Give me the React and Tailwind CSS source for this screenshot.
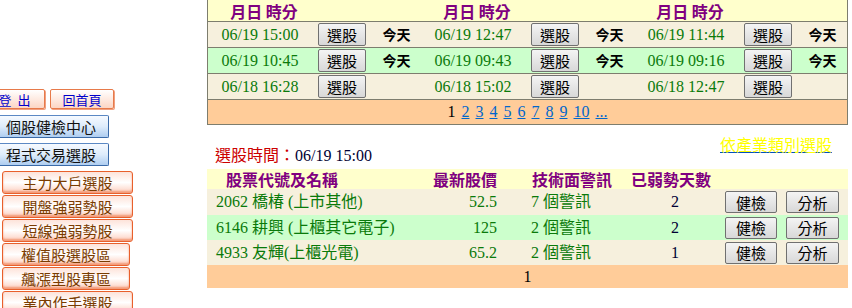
import React from 'react';

const topRows = [
  { bg: 'bg-[#f6f0dd]', cells: [['06/19 15:00', true], ['06/19 12:47', true], ['06/19 11:44', true]] },
  { bg: 'bg-[#ccffcc]', cells: [['06/19 10:45', true], ['06/19 09:43', true], ['06/19 09:16', true]] },
  { bg: 'bg-[#f6f0dd]', cells: [['06/18 16:28', false], ['06/18 15:02', false], ['06/18 12:47', false]] },
];

const stocks = [
  { bg: 'bg-[#f6f0dd]', name: '2062 橋椿 (上市其他)', price: '52.5', warn: '7', days: '2' },
  { bg: 'bg-[#ccffcc]', name: '6146 耕興 (上櫃其它電子)', price: '125', warn: '2', days: '2' },
  { bg: 'bg-[#f6f0dd]', name: '4933 友輝(上櫃光電)', price: '65.2', warn: '2', days: '1' },
];

const sideItems = [
  { label: '主力大戶選股', w: 'w-[131px]' },
  { label: '開盤強弱勢股', w: 'w-[131px]' },
  { label: '短線強弱勢股', w: 'w-[131px]' },
  { label: '權值股選股區', w: 'w-[128px]' },
  { label: '飆漲型股專區', w: 'w-[128px]' },
  { label: '業內作手選股', w: 'w-[131px]' },
];

function GrayButton({ children, className }) {
  return (
    <button className={`flex items-center justify-center border border-[#707070] bg-gradient-to-b from-[#f4f4f4] to-[#d8d8d8] rounded-[2px] text-[15px] text-black leading-none font-['Noto_Sans_CJK_TC',sans-serif] ${className}`}>
      {children}
    </button>
  );
}

export default function App() {
  return (
    <div className="w-[852px] h-[308px] overflow-hidden bg-white flex font-['Liberation_Serif','Noto_Sans_CJK_TC',serif]">
      {/* left menu */}
      <div className="w-[207px] shrink-0 pt-[89px] font-['Noto_Sans_CJK_TC',sans-serif]">
        <div className="flex gap-[5px] ml-[-16px]">
          <button className="w-[61px] h-[20px] border border-[#e77a4a] rounded-[2px] bg-gradient-to-b from-[#fff] to-[#fcd6c4] text-[13px] leading-none text-[#0000cc] shadow-[1px_1px_0_#f0a080]">登&nbsp;&nbsp;出</button>
          <button className="w-[64px] h-[20px] border border-[#e77a4a] rounded-[2px] bg-gradient-to-b from-[#fff] to-[#fcd6c4] text-[13px] leading-none text-[#0000cc] shadow-[1px_1px_0_#f0a080]">回首頁</button>
        </div>
        <div className="flex flex-col gap-[5px] mt-[6px] ml-[-7px]">
          {['個股健檢中心', '程式交易選股'].map((t) => (
            <button key={t} className="w-[116px] h-[23px] border border-[#5b88c4] border-r-[#3a6aa8] border-b-[#3a6aa8] rounded-[2px] bg-gradient-to-b from-[#f6faff] via-[#deecfb] to-[#aecdf0] text-[15px] leading-none text-[#111]">
              {t}
            </button>
          ))}
        </div>
        <div className="flex flex-col gap-[1px] mt-[5px] ml-[2px]">
          {sideItems.map((s) => (
            <button key={s.label} className={`${s.w} h-[23px] border border-[#e8602c] rounded-[3px] bg-gradient-to-b from-[#fde3da] via-[#ffffff] to-[#fbcdbd] shadow-[inset_0_-2px_2px_#f39a78] text-[15px] leading-none text-[#7a3c00]`}>
              {s.label}
            </button>
          ))}
        </div>
      </div>

      {/* main */}
      <div className="w-[641px] shrink-0">
        <div className="border-x border-b border-[#7d7d6e]">
          <div className="flex h-[22px] bg-[#ffffcc] border-b border-[#7d7d6e]">
            {[0, 1, 2].map((i) => (
              <div key={i} className="w-[213px] flex">
                <div className="w-[112px] text-center text-[16px] leading-[22px] font-bold text-[#800080] font-['Noto_Sans_CJK_TC',sans-serif]">月日 時分</div>
              </div>
            ))}
          </div>
          {topRows.map((r, ri) => (
            <div key={ri} className={`flex h-[26px] border-b border-[#7d7d6e] ${r.bg}`}>
              {r.cells.map(([time, today], ci) => (
                <div key={ci} className="w-[213px] flex items-center">
                  <div className="w-[104px] text-center text-[16px] text-[#0a7a0a]">{time}</div>
                  <div className="w-[60px] flex justify-center">
                    <GrayButton className="w-[48px] h-[23px]">選股</GrayButton>
                  </div>
                  <div className="w-[49px] text-center text-[14px] font-bold text-black font-['Noto_Sans_CJK_TC',sans-serif]">{today ? '今天' : ''}</div>
                </div>
              ))}
            </div>
          ))}
          <div className="h-[24px] bg-[#ffcc99] flex items-center justify-center gap-[6px] text-[16px] leading-none">
            <span className="text-black">1</span>
            {['2', '3', '4', '5', '6', '7', '8', '9', '10', '...'].map((p) => (
              <a key={p} href="#" className="text-[#0066cc] underline">{p}</a>
            ))}
          </div>
        </div>

        <div className="flex justify-between h-[44px] w-[641px]">
          <div className="self-end pb-[5px] pl-[8px] text-[16px] leading-none">
            <span className="text-[#cc0000] font-['Noto_Sans_CJK_TC',sans-serif]">選股時間：</span>
            <span className="text-[#000033]">06/19 15:00</span>
          </div>
          <a href="#" className="mt-[11px] mr-[16px] h-[18px] text-[16px] leading-none text-[#ffff00] underline decoration-[#0050c0] font-['Noto_Sans_CJK_TC',sans-serif]">依產業類別選股</a>
        </div>

        <div className="w-[641px]">
          <div className="flex h-[20px] bg-[#ffffcc] items-center text-[16px] font-bold text-[#800080] font-['Noto_Sans_CJK_TC',sans-serif]">
            <div className="w-[215px] pl-[19px]">股票代號及名稱</div>
            <div className="w-[106px] pr-[31px] text-right">最新股價</div>
            <div className="w-[97px] pl-[4px]">技術面警訊</div>
            <div className="w-[100px] pl-[6px]">已弱勢天數</div>
            <div className="flex-1" />
          </div>
          {stocks.map((s) => (
            <div key={s.name} className={`flex items-center ${s.bg} ${s.name.startsWith('2062') ? 'h-[26px]' : 'h-[25px]'}`}>
              <div className="w-[215px] pl-[9px] text-[16px] text-[#0a7a0a] whitespace-nowrap">{s.name}</div>
              <div className="w-[106px] pr-[31px] text-right text-[16px] text-[#0a7a0a]">{s.price}</div>
              <div className="w-[97px] pl-[3px] text-[16px] text-[#0a7a0a]">{s.warn} 個警訊</div>
              <div className="w-[100px] text-center text-[16px] text-[#000033]">{s.days}</div>
              <div className="flex gap-[9px]">
                <GrayButton className="w-[52px] h-[22px]">健檢</GrayButton>
                <GrayButton className="w-[53px] h-[22px]">分析</GrayButton>
              </div>
            </div>
          ))}
          <div className="h-[23px] bg-[#ffcc99] flex items-center justify-center text-[16px] text-black">1</div>
        </div>
      </div>
    </div>
  );
}
